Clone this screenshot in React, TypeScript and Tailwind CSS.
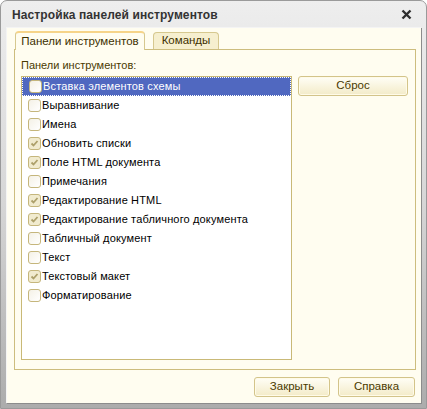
import React from "react";

const items: { label: string; checked: boolean }[] = [
  { label: "Вставка элементов схемы", checked: false },
  { label: "Выравнивание", checked: false },
  { label: "Имена", checked: false },
  { label: "Обновить списки", checked: true },
  { label: "Поле HTML документа", checked: true },
  { label: "Примечания", checked: false },
  { label: "Редактирование HTML", checked: true },
  { label: "Редактирование табличного документа", checked: true },
  { label: "Табличный документ", checked: false },
  { label: "Текст", checked: false },
  { label: "Текстовый макет", checked: true },
  { label: "Форматирование", checked: false },
];

function Check({ checked }: { checked: boolean }) {
  return (
    <span
      className={
        "flex h-[13px] w-[13px] shrink-0 items-center justify-center rounded-[3px] border border-[#c5b67c] " +
        (checked ? "bg-[#f1ebcf]" : "bg-gradient-to-br from-[#f4f1e6] to-white")
      }
    >
      {checked && (
        <svg width="9" height="9" viewBox="0 0 9 9">
          <path d="M1.5 4.5 L3.5 6.5 L7.5 2" fill="none" stroke="#ada06a" strokeWidth="1.8" />
        </svg>
      )}
    </span>
  );
}

function Btn({ children, className = "" }: { children: React.ReactNode; className?: string }) {
  return (
    <button
      className={
        "flex h-[20px] items-center justify-center rounded-[3px] border border-[#d3c48a] bg-gradient-to-b from-[#fffef6] to-[#f3ebc8] text-[11.5px] text-[#4a3a00] shadow-[inset_0_0_0_1px_#fffbe8] " +
        className
      }
    >
      {children}
    </button>
  );
}

export default function App() {
  return (
    <div
      className="h-[409px] w-[427px] bg-white"
      style={{ fontFamily: '"Liberation Sans", Arial, sans-serif' }}
    >
      <div className="flex h-full w-full flex-col rounded-t-[7px] border border-[#9a9a9a] bg-gradient-to-b from-[#eeeeee] via-[#d6d6d6] to-[#acacac] pb-[5px] pl-[5px] pr-[5px]">
        {/* title bar */}
        <div className="flex h-[26px] shrink-0 items-center justify-between pl-[6px] pr-[9px] pt-[1px]">
          <span className="text-[12px] font-bold tracking-[0.1px] text-[#333]">
            Настройка панелей инструментов
          </span>
          <svg width="11" height="11" viewBox="0 0 11 11">
            <path d="M1.5 1.5 L9.5 9.5 M9.5 1.5 L1.5 9.5" stroke="#2e2e2e" strokeWidth="2.4" />
          </svg>
        </div>

        {/* client area */}
        <div className="flex flex-1 flex-col border-l border-t border-[#f4f4f4] bg-[#fffdf0] pl-[7px] pr-[5px] pt-[3px] shadow-[1px_1px_0_#8c8c8c]">
          {/* tabs */}
          <div className="flex items-end pl-[1px]">
            <div className="relative z-10 -mb-px flex h-[19px] w-[130px] items-center justify-center rounded-t-[4px] border border-b-0 border-[#d6c88f] border-t-[#f6d489] border-t-2 bg-[#fffdf0] text-[11.5px] text-[#3d3000]">
              Панели инструментов
            </div>
            <div className="ml-[8px] flex h-[17px] w-[66px] items-center justify-center rounded-t-[4px] border border-b-0 border-[#d6c88f] bg-[#f6efcf] text-[11.5px] text-[#3d3000]">
              Команды
            </div>
          </div>

          {/* tab panel */}
          <div className="flex h-[321px] flex-col border border-[#cdbd7e] px-[6px] pt-[8px]">
            <div className="text-[11px] leading-[14px] text-[#4a3a00]">Панели инструментов:</div>
            <div className="mt-[4px] flex gap-[6px]">
              <div className="h-[284px] w-[271px] border border-[#c9b977] bg-white">
                {items.map((it, i) => (
                  <div
                    key={it.label}
                    className={
                      "flex h-[19px] items-center gap-[1px] pl-[6px] text-[11px] tracking-[0.15px] " +
                      (i === 0
                        ? "border border-dotted border-white bg-[#5068c0] pl-[5px] text-white"
                        : "text-black")
                    }
                  >
                    <Check checked={it.checked} />
                    <span className="whitespace-nowrap">{it.label}</span>
                  </div>
                ))}
              </div>
              <Btn className="w-[110px]">Сброс</Btn>
            </div>
          </div>

          {/* bottom buttons */}
          <div className="mt-[7px] flex justify-end gap-[8px] pr-[1px]">
            <Btn className="w-[76px]">Закрыть</Btn>
            <Btn className="w-[77px]">Справка</Btn>
          </div>
        </div>
      </div>
    </div>
  );
}
